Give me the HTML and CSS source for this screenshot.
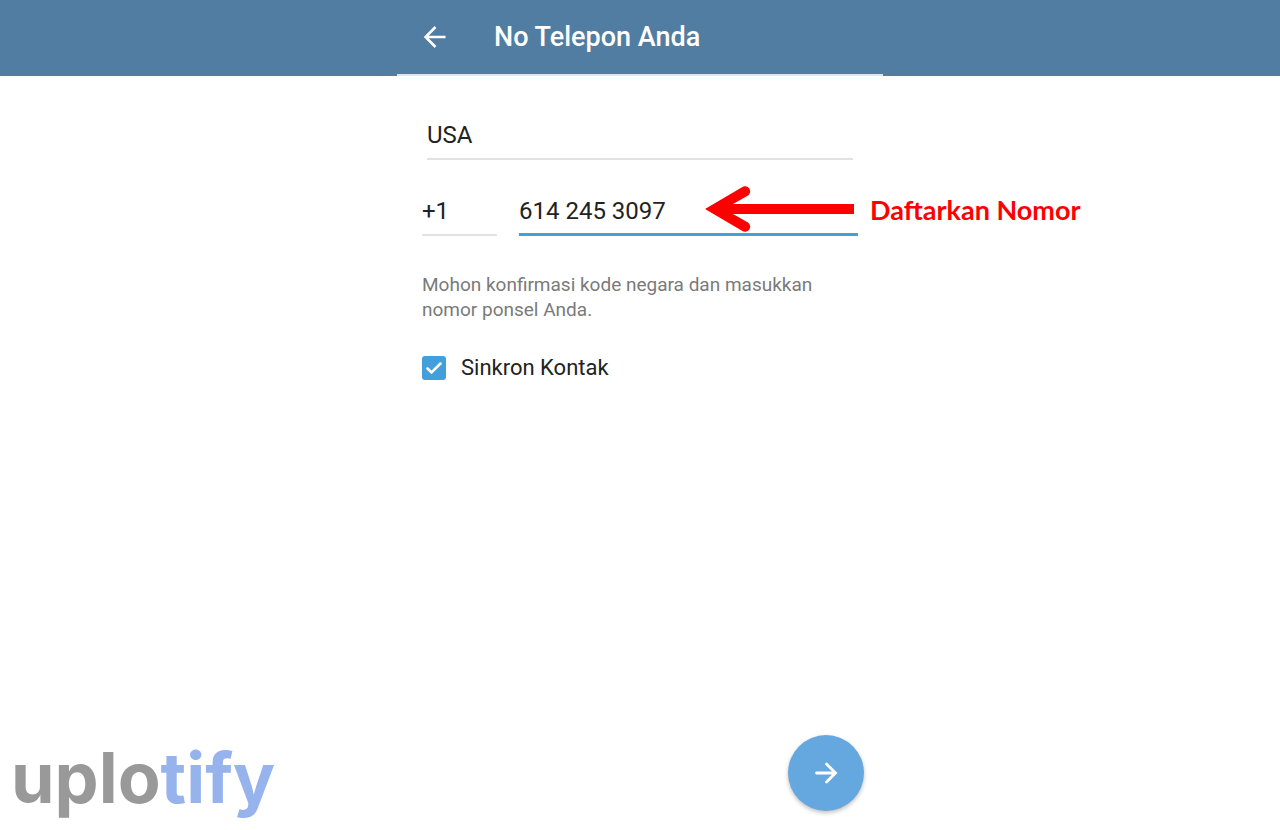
FILE: index.html
```html
<!DOCTYPE html>
<html lang="id">
<head>
  <meta charset="UTF-8" />
  <meta name="viewport" content="width=device-width, initial-scale=1.0"/>
  <title>No Telepon Anda</title>
  <link rel="stylesheet" href="styles.css">
</head>
<body>

<header>
  <div class="bar">
    <button type="button" class="back" aria-label="Kembali">
      <svg width="24" height="24" viewBox="0 0 24 24" fill="none" stroke="#fff" stroke-width="2.5">
        <path d="M23.5 12H4M13.5 2L3.500 12l10 10"/>
      </svg>
    </button>
    <h1>No Telepon Anda</h1>
  </div>
</header>

<form id="phoneForm">
  <select class="country" aria-label="Negara">
    <option>USA</option>
  </select>

  <div class="number">
    <input type="text" class="code" value="+1" aria-label="Kode negara">
    <input type="tel" class="phone" value="614 245 3097" aria-label="Nomor ponsel">
    <div class="note">
      <svg width="150" height="46" viewBox="0 0 150 46">
        <path d="M0 23L37 1.2A5 5 0 0 1 43 9.500L28 18H149V28H28L43 36.500A5 5 0 0 1 37 44.800Z" fill="#f00"/>
      </svg>
      <strong>Daftarkan Nomor</strong>
    </div>
  </div>

  <p>Mohon konfirmasi kode negara dan masukkan nomor ponsel Anda.</p>

  <label class="sync">
    <input type="checkbox" checked>
    <svg class="tick" width="16" height="12" viewBox="0 0 16 12" fill="none" stroke="#fff" stroke-width="2.5" stroke-linecap="round">
      <path d="M1.5 6.500l4 4 9-9"/>
    </svg>
    Sinkron Kontak
  </label>
</form>

<footer>
  <div class="logo">uplo<span>tify</span></div>
  <div class="action">
    <button type="submit" form="phoneForm" class="next" aria-label="Lanjut">
      <svg width="24" height="24" viewBox="0 0 24 24" fill="none" stroke="#fff" stroke-width="2.8" stroke-linecap="round">
        <path d="M2.5 12H21M12.500 3l9 9-9 9"/>
      </svg>
    </button>
  </div>
</footer>

</body>
</html>
```
FILE: styles.css
```css
* {
  box-sizing: border-box;
}

body {
  margin: 0;
  min-height: 100vh;
  display: flex;
  flex-direction: column;
  background: #fff;
  color: #222;
  font-family: Roboto, sans-serif;
}

header {
  background: #517da2;
}

.bar {
  display: flex;
  align-items: center;
  gap: 48px;
  width: 100%;
  max-width: 486px;
  height: 76px;
  margin: 0 auto;
  padding-left: 25px;
  border-bottom: 2px solid #dfe5ec;
}

button {
  display: flex;
  align-items: center;
  justify-content: center;
  padding: 0;
  border: none;
  background: none;
  cursor: pointer;
}

h1 {
  margin: 0;
  color: #fff;
  font-size: 27px;
  font-weight: 500;
  line-height: 32px;
}

form {
  width: 100%;
  max-width: 486px;
  margin: 0 auto;
  padding: 36px 25px 0;
}

.country,
.code,
.phone {
  height: 48px;
  padding: 0;
  border: none;
  border-bottom: 2px solid #e2e2e2;
  border-radius: 0;
  outline: none;
  background: none;
  color: #222;
  font-family: inherit;
  font-size: 24px;
  appearance: none;
}

.country {
  display: block;
  width: calc(100% - 10px);
  margin: 0 auto;
}

.number {
  position: relative;
  display: flex;
  gap: 22px;
  margin-top: 28px;
}

.code {
  width: 75px;
}

.phone {
  flex: 1;
  min-width: 0;
  border-bottom: 3px solid #419fdc;
}

/* sits over the phone field and runs out past the column */
.note {
  position: absolute;
  left: 283px;
  top: -2px;
  display: flex;
  align-items: center;
  gap: 15px;
  color: #f00;
  font-family: Lato, sans-serif;
  font-size: 27px;
  white-space: nowrap;
  pointer-events: none;
}

p {
  margin: 36px 0 0;
  color: #7a7a7a;
  font-size: 19px;
  line-height: 25px;
}

.sync {
  display: grid;
  grid-template-columns: 24px auto;
  align-items: center;
  gap: 15px;
  margin-top: 32px;
  font-size: 22px;
  line-height: 27px;
}

.sync input,
.tick {
  grid-area: 1 / 1;
  justify-self: center;
}

.sync input {
  width: 24px;
  height: 24px;
  margin: 0;
  border-radius: 3px;
  background: #ccc;
  appearance: none;
}

.sync input:checked {
  background: #419fdc;
}

footer {
  display: grid;
  grid-template-columns: 1fr minmax(0, 486px) 1fr;
  align-items: end;
  margin-top: auto;
  padding-bottom: 19px;
}

.logo {
  padding-left: 11px;
  color: #999;
  font-family: Inter, sans-serif;
  font-size: 70px;
  font-weight: 700;
  line-height: 66px;
}

.logo span {
  color: #96b3ee;
}

.action {
  display: flex;
  justify-content: flex-end;
  padding-right: 19px;
}

.next {
  width: 76px;
  height: 76px;
  border-radius: 50%;
  background: #65a8e0;
  box-shadow: 0 2px 4px rgba(0, 0, 0, 0.25);
}
```
